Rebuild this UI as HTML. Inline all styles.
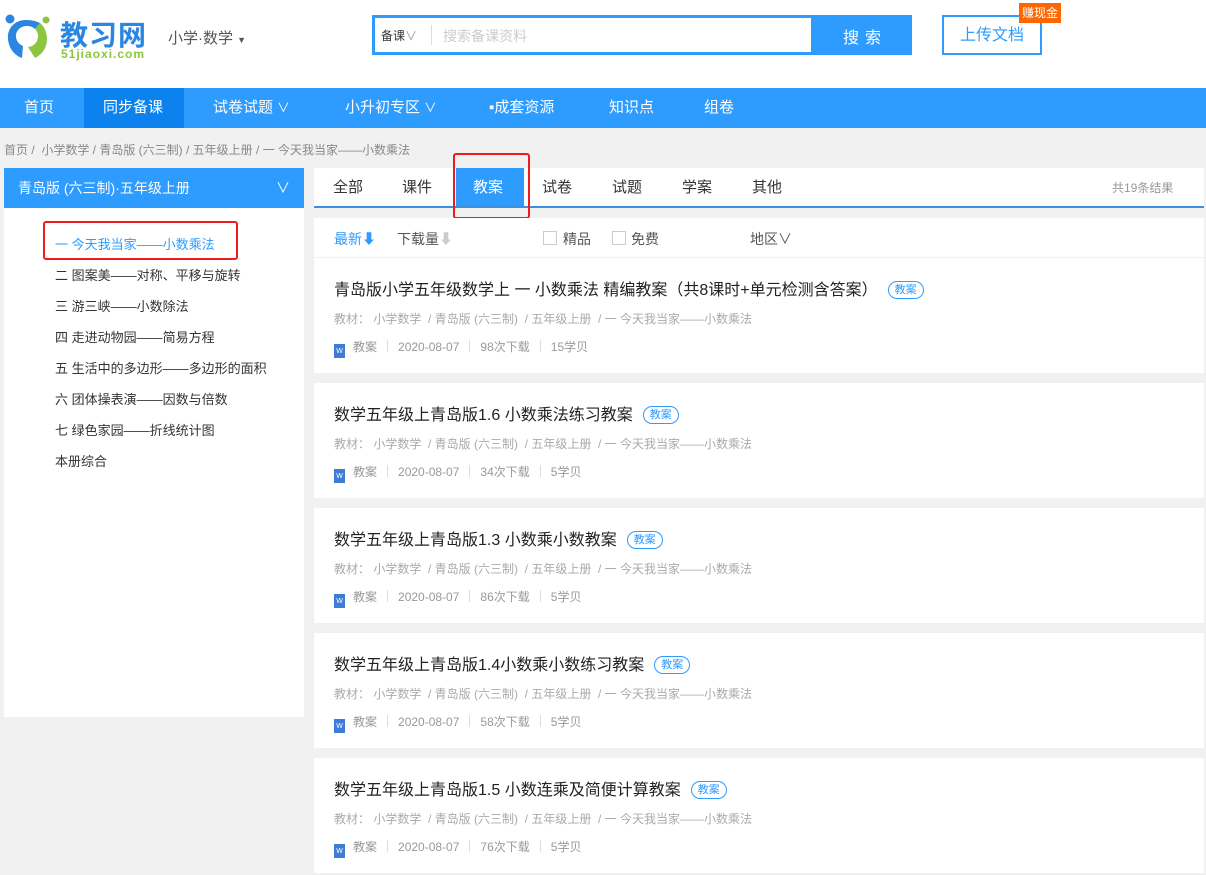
<!DOCTYPE html>
<html><head><meta charset="utf-8"><style>
*{margin:0;padding:0;box-sizing:border-box}
body{width:1206px;height:875px;overflow:hidden;background:#f1f1f1;font-family:"Liberation Sans","Noto Sans CJK SC",sans-serif;position:relative}
.a{position:absolute}
.top{left:0;top:0;width:1206px;height:88px;background:#fff}
.nav{left:0;top:88px;width:1206px;height:40px;background:#2e9bff}
.nav span{position:absolute;top:0;line-height:40px;color:#fff;font-size:15px}
.side{left:4px;top:168px;width:300px;height:549px;background:#fff}
.sh{height:40px;background:#2e9bff;color:#fff;font-size:14px;line-height:40px;padding-left:14px;position:relative}
.side p{position:absolute;left:51px;font-size:13px;color:#333}
.main{left:314px;width:890px;background:#fff}
.card{height:115px}
.card .t{position:absolute;left:20px;top:18px;font-size:16px;color:#222}
.tag{display:inline-block;border:1px solid #2e9bff;color:#2e9bff;border-radius:10px;font-size:11px;line-height:16px;padding:0 6px;margin-left:10px;vertical-align:2px}
.card .m{position:absolute;left:20px;top:52px;font-size:12px;color:#aaa}
.card .i{position:absolute;left:20px;top:80px;font-size:12px;color:#999}
.w{display:inline-block;width:11px;height:14px;background:#3d7dd8;vertical-align:-2px;margin-right:8px;color:#fff;font-size:7px;text-align:center;line-height:16px}
.sep{display:inline-block;width:1px;height:12px;background:#ddd;margin:0 10px;vertical-align:-1px}
.tabs span{position:absolute;top:0;line-height:40px;font-size:15px;color:#333}
</style></head><body>
<div class="a top"></div>
<svg class="a" style="left:4px;top:14px" width="48" height="48" viewBox="0 0 48 48"><circle cx="6" cy="5" r="4.5" fill="#2a86e0"/><circle cx="42" cy="6" r="3.5" fill="#8cc63f"/><path d="M22 6 C10 6 3 15 4 25 C5 36 12 42 18 44 L19 32 C14 30 12 26 12 22 C12 16 17 12 23 12 C26 12 29 13 31 15 L36 9 C32 7 27 6 22 6Z" fill="#2a86e0"/><path d="M36 9 L31 15 C34 18 35 22 33 27 C31 31 27 33 24 33 L31 44 C39 40 43 33 43 25 C43 18 40 12 36 9Z" fill="#8cc63f"/></svg>
<div class="a" style="left:60px;top:14px;font-size:28px;color:#2a86e0;font-weight:bold;letter-spacing:1px">教习网</div>
<div class="a" style="left:61px;top:47px;font-size:12px;color:#8cc63f;font-weight:bold;letter-spacing:1px">51jiaoxi.com</div>
<div class="a" style="left:168px;top:27px;font-size:15px;color:#555">小学·数学 <span style="font-size:9px">▼</span></div>
<div class="a" style="left:372px;top:15px;width:540px;height:40px;background:#2e9bff"></div>
<div class="a" style="left:375px;top:18px;width:436px;height:34px;background:#fff"></div>
<div class="a" style="left:381px;top:27px;font-size:12px;color:#333">备课<span style="color:#999">∨</span></div>
<div class="a" style="left:431px;top:25px;width:1px;height:20px;background:#ddd"></div>
<div class="a" style="left:443px;top:26px;font-size:14px;color:#ccc">搜索备课资料</div>
<div class="a" style="left:843px;top:24px;font-size:16px;color:#fff;letter-spacing:6px">搜索</div>
<div class="a" style="left:942px;top:15px;width:100px;height:40px;border:2px solid #2e9bff;color:#2e9bff;font-size:16px;text-align:center;line-height:38px">上传文档</div>
<div class="a" style="left:1019px;top:3px;width:42px;height:20px;background:#ff6600;color:#fff;font-size:12px;line-height:20px;text-align:center">赚现金</div>
<div class="a nav">
<span style="left:24px">首页</span>
<div class="a" style="left:84px;top:0;width:100px;height:40px;background:#0b82ee"></div>
<span style="left:103px">同步备课</span>
<span style="left:213px">试卷试题 <small>∨</small></span>
<span style="left:345px">小升初专区 <small>∨</small></span>
<span style="left:489px">▪成套资源</span>
<span style="left:609px">知识点</span>
<span style="left:704px">组卷</span>
</div>
<div class="a" style="left:4px;top:141px;font-size:12px;color:#888">首页 / &nbsp;小学数学 / 青岛版 (六三制) / 五年级上册 / 一 今天我当家——小数乘法</div>
<div class="a side"><div class="sh">青岛版 (六三制)·五年级上册<span style="position:absolute;right:14px;top:0">∨</span></div>
<p style="top:66px;color:#2e9bff">一 今天我当家——小数乘法</p>
<p style="top:97px">二 图案美——对称、平移与旋转</p>
<p style="top:128px">三 游三峡——小数除法</p>
<p style="top:159px">四 走进动物园——简易方程</p>
<p style="top:190px">五 生活中的多边形——多边形的面积</p>
<p style="top:221px">六 团体操表演——因数与倍数</p>
<p style="top:252px">七 绿色家园——折线统计图</p>
<p style="top:283px">本册综合</p>
</div>
<div class="a" style="left:43px;top:221px;width:195px;height:39px;border:2px solid #f01c1c;border-radius:3px"></div>
<div class="a main tabs" style="top:168px;height:40px;border-bottom:2px solid #3d90e0">
<div class="a" style="left:142px;top:0;width:68px;height:38px;background:#2e9bff"></div>
<span style="left:19px">全部</span><span style="left:88px">课件</span><span style="left:159px;color:#fff">教案</span><span style="left:228px">试卷</span><span style="left:298px">试题</span><span style="left:368px">学案</span><span style="left:438px">其他</span>
<span style="left:798px;font-size:12px;color:#999">共19条结果</span>
</div>
<div class="a" style="left:453px;top:153px;width:77px;height:66px;border:2px solid #f01c1c;border-radius:3px"></div>
<div class="a main" style="top:218px;height:39px;font-size:14px;color:#555">
<span class="a" style="left:20px;top:11px;color:#2e9bff">最新⬇</span>
<span class="a" style="left:83px;top:11px">下载量<span style="color:#ccc">⬇</span></span>
<span class="a" style="left:229px;top:13px;width:14px;height:14px;border:1px solid #ccc"></span><span class="a" style="left:249px;top:11px">精品</span>
<span class="a" style="left:298px;top:13px;width:14px;height:14px;border:1px solid #ccc"></span><span class="a" style="left:317px;top:11px">免费</span>
<span class="a" style="left:436px;top:11px">地区∨</span>
</div>
<div class="a main card" style="top:258px"><div class="t">青岛版小学五年级数学上 一 小数乘法 精编教案（共8课时+单元检测含答案）<span class="tag">教案</span></div><div class="m">教材： 小学数学 &nbsp;/ 青岛版 (六三制) &nbsp;/ 五年级上册 &nbsp;/ 一 今天我当家——小数乘法</div><div class="i"><span class="w">W</span>教案<span class="sep"></span>2020-08-07<span class="sep"></span>98次下载<span class="sep"></span>15学贝</div></div>
<div class="a main card" style="top:383px"><div class="t">数学五年级上青岛版1.6 小数乘法练习教案<span class="tag">教案</span></div><div class="m">教材： 小学数学 &nbsp;/ 青岛版 (六三制) &nbsp;/ 五年级上册 &nbsp;/ 一 今天我当家——小数乘法</div><div class="i"><span class="w">W</span>教案<span class="sep"></span>2020-08-07<span class="sep"></span>34次下载<span class="sep"></span>5学贝</div></div>
<div class="a main card" style="top:508px"><div class="t">数学五年级上青岛版1.3 小数乘小数教案<span class="tag">教案</span></div><div class="m">教材： 小学数学 &nbsp;/ 青岛版 (六三制) &nbsp;/ 五年级上册 &nbsp;/ 一 今天我当家——小数乘法</div><div class="i"><span class="w">W</span>教案<span class="sep"></span>2020-08-07<span class="sep"></span>86次下载<span class="sep"></span>5学贝</div></div>
<div class="a main card" style="top:633px"><div class="t">数学五年级上青岛版1.4小数乘小数练习教案<span class="tag">教案</span></div><div class="m">教材： 小学数学 &nbsp;/ 青岛版 (六三制) &nbsp;/ 五年级上册 &nbsp;/ 一 今天我当家——小数乘法</div><div class="i"><span class="w">W</span>教案<span class="sep"></span>2020-08-07<span class="sep"></span>58次下载<span class="sep"></span>5学贝</div></div>
<div class="a main card" style="top:758px"><div class="t">数学五年级上青岛版1.5 小数连乘及简便计算教案<span class="tag">教案</span></div><div class="m">教材： 小学数学 &nbsp;/ 青岛版 (六三制) &nbsp;/ 五年级上册 &nbsp;/ 一 今天我当家——小数乘法</div><div class="i"><span class="w">W</span>教案<span class="sep"></span>2020-08-07<span class="sep"></span>76次下载<span class="sep"></span>5学贝</div></div>
</body></html>
